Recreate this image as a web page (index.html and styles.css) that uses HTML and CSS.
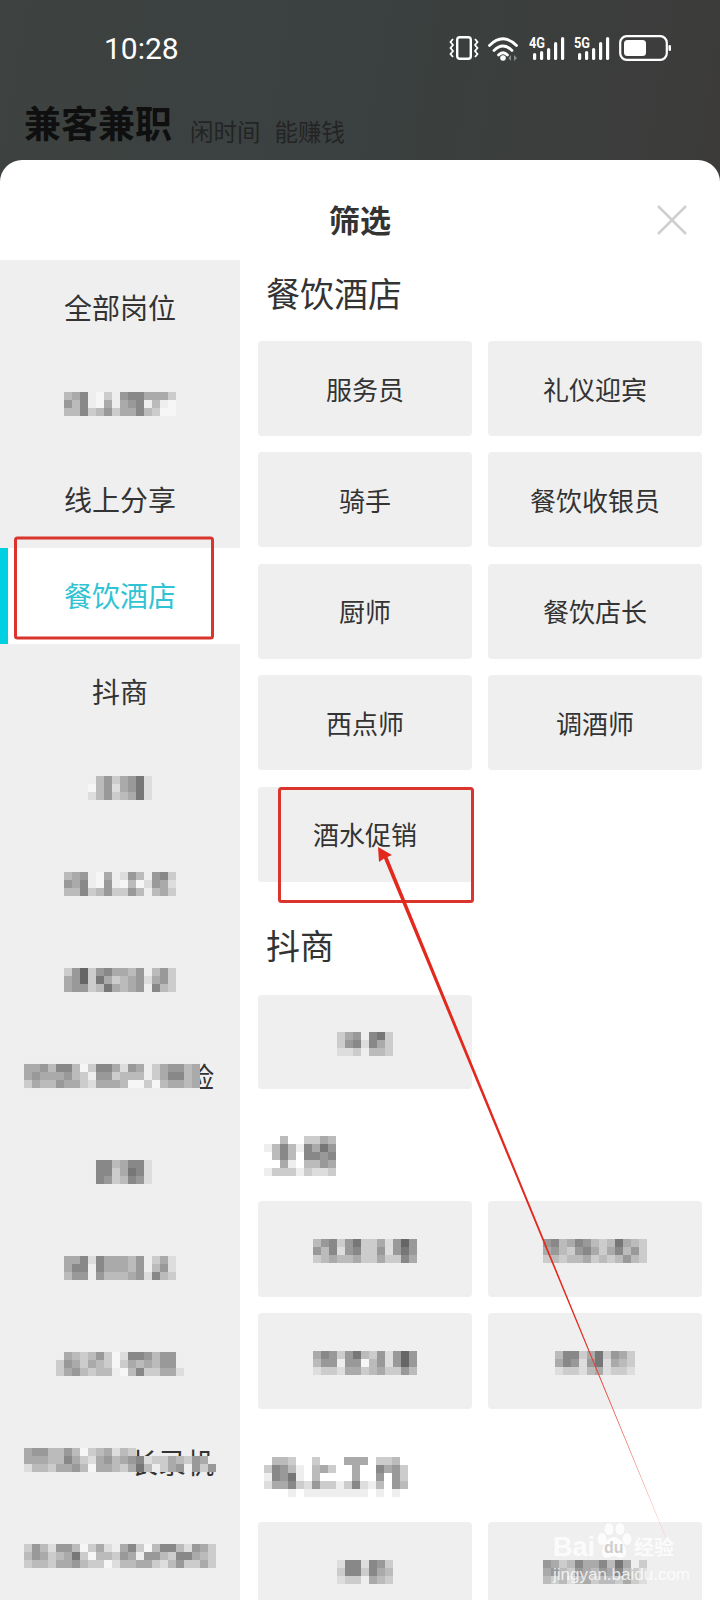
FILE: index.html
```html
<!DOCTYPE html>
<html lang="zh-CN">
<head>
    <meta charset="UTF-8">
    <meta name="viewport" content="width=device-width, initial-scale=1.0">
    <title>筛选</title>
    <link rel="stylesheet" href="styles.css">
</head>
<body>
<div class="backdrop">
    <div class="status-bar">
        <span class="time">10:28</span>
        <div class="status-icons">
            <svg class="icon-vibrate" width="30" height="24" viewBox="0 0 30 24" fill="none" stroke="#fff">
                <rect x="8.200" y="1.200" width="13.600" height="21.600" rx="2.600" stroke-width="2.400"/>
                <path d="M4 3 L1.500 6 L4 9 L1.500 12 L4 15 L1.500 18 L4 21" stroke-width="1.800"/>
                <path d="M26 3 L28.500 6 L26 9 L28.500 12 L26 15 L28.500 18 L26 21" stroke-width="1.800"/>
            </svg>
            <svg class="icon-wifi" width="32" height="25" viewBox="0 0 32 25" fill="none" stroke="#fff" stroke-width="2.800" stroke-linecap="round">
                <path d="M1.500 9.500 Q15 -4 28.500 9.500"/>
                <path d="M6 14.500 Q15 5.500 24 14.500"/>
                <path d="M10.500 19 Q15 14.500 19.500 19"/>
                <circle cx="15" cy="22" r="2.800" fill="#fff" stroke="none"/>
                <path d="M23 19 L20.500 22 L23 25 Z M26 19 L29 22 L26 25 Z" fill="#8b8e8d" stroke="none"/>
            </svg>
            <svg class="icon-signal" width="36" height="25" viewBox="0 0 36 25" fill="#fff">
                <text x="0" y="12" class="net-label" textLength="16" lengthAdjust="spacingAndGlyphs">4G</text>
                <rect x="4" y="17" width="3.200" height="7" rx="1.600"/>
                <rect x="11" y="15" width="3.200" height="9" rx="1.600"/>
                <rect x="18" y="12" width="3.200" height="12" rx="1.600"/>
                <rect x="25" y="6" width="3.200" height="18" rx="1.600"/>
                <rect x="32" y="1" width="3.200" height="23" rx="1.600"/>
            </svg>
            <svg class="icon-signal" width="36" height="25" viewBox="0 0 36 25" fill="#fff">
                <text x="0" y="12" class="net-label" textLength="16" lengthAdjust="spacingAndGlyphs">5G</text>
                <rect x="4" y="17" width="3.200" height="7" rx="1.600"/>
                <rect x="11" y="15" width="3.200" height="9" rx="1.600"/>
                <rect x="18" y="12" width="3.200" height="12" rx="1.600"/>
                <rect x="25" y="6" width="3.200" height="18" rx="1.600"/>
                <rect x="32" y="1" width="3.200" height="23" rx="1.600"/>
            </svg>
            <svg class="icon-battery" width="52" height="26" viewBox="0 0 52 26" fill="none">
                <rect x="1.200" y="1.200" width="46.600" height="23.600" rx="6.500" stroke="#fff" stroke-width="2.200"/>
                <rect x="5" y="5" width="22" height="16" rx="3.500" fill="#fff"/>
                <rect x="49.500" y="10" width="2.500" height="6" rx="1.200" fill="#fff"/>
            </svg>
        </div>
    </div>
    <div class="brand">
        <span class="brand-name">兼客兼职</span>
        <span class="brand-sub">闲时间</span>
        <span class="brand-sub">能赚钱</span>
    </div>
</div>

<div class="sheet">
    <div class="sheet-head">
        <h1>筛选</h1>
        <svg class="close" width="30" height="30" viewBox="0 0 30 30" stroke="#cfcfcf" stroke-width="2.500">
            <path d="M1 1 L29 29 M29 1 L1 29"/>
        </svg>
    </div>
    <div class="sheet-body">
        <ul class="side">
            <li class="side-item">全部岗位</li>
            <li class="side-item"><span class="mosaic" data-rows="ba8efce988aaac|9b8efaea98ebef|bb8cb9caa8bcff"></span></li>
            <li class="side-item">线上分享</li>
            <li class="side-item active">餐饮酒店</li>
            <li class="side-item">抖商</li>
            <li class="side-item"><span class="mosaic" data-rows="eb9ca97d|fb9da97d|db9cba7d"></span></li>
            <li class="side-item"><span class="mosaic" data-rows="ba9efaed9be98c|9a8ef9efbfd9ad|bb8cb9cc9bebac"></span></li>
            <li class="side-item"><span class="mosaic" data-rows="c96c98aab9eb9c|a96c7acba9da9c|a99cb7aba9e8bc"></span></li>
            <li class="side-item side-left">
                <span class="peek">险</span>
                <span class="mosaic" data-rows="eeeeeeeeeeeeeeeeeeeeee|aa9b88bfc88ad9aeca99ba|a9aaa9bce99cbbbeca88ba|cabb9aacdaaabffcfbaaba|eeeeeeeeeeeeeeeeeeeeee"></span>
            </li>
            <li class="side-item"><span class="mosaic" data-rows="e88ba88d|e88ca78d|e89cb89d"></span></li>
            <li class="side-item"><span class="mosaic" data-rows="aa8d8aaab9ecad|a88e8aaab9eb9d|b99e9bbba9d8bc"></span></li>
            <li class="side-item"><span class="mosaic" data-rows="eabcb9cfd889b99e|c9acabcfcabab99e|ca9bcbbefb8ccaad"></span></li>
            <li class="side-item">
                <span class="peek peek-low">长录机</span>
                <span class="mosaic" data-rows="a99bb9bfcbadbc..........|aaabb8acda9ba98dccabc9ae|dbbcaa9bfaabca7beca9e9c9"></span>
            </li>
            <li class="side-item"><span class="mosaic" data-rows="c9bd99bfcadea8cfb88bd9ac|b9acba7cfbbc9ae99bc88abc|cbbcaa9bccfdbbaacdb9ccac"></span></li>
        </ul>

        <div class="main">
            <section class="group">
                <h2>餐饮酒店</h2>
                <div class="cards">
                    <div class="card">服务员</div>
                    <div class="card">礼仪迎宾</div>
                    <div class="card">骑手</div>
                    <div class="card">餐饮收银员</div>
                    <div class="card">厨师</div>
                    <div class="card">餐饮店长</div>
                    <div class="card">西点师</div>
                    <div class="card">调酒师</div>
                    <div class="card">酒水促销</div>
                </div>
            </section>

            <section class="group group-short">
                <h2>抖商</h2>
                <div class="cards">
                    <div class="card"><span class="mosaic" data-rows="ca9e87c|c98d8ac|ddcebbc"></span></div>
                </div>
            </section>

            <section class="group group-tall">
                <h2 class="blurred"><span class="mosaic" data-rows="..b..ccab|eb8be8a79|.b8b.8898|..ae.bb9a|ecccecddc"></span></h2>
                <div class="cards">
                    <div class="card"><span class="mosaic" data-rows="b98c97ccad969|9b8d98cc9d979|cbabbaccacc8a"></span></div>
                    <div class="card"><span class="mosaic" data-rows="98ba89bcb7abc|a9bc98aca8b9c|cbcbbacbcb9bc"></span></div>
                    <div class="card"><span class="mosaic" data-rows="a89c97bc9d969|b99e99fb9d969|dccdaacbacc9b"></span></div>
                    <div class="card"><span class="mosaic" data-rows="b88ca7c9ac|a89d97dabc|dccdbadccd"></span></div>
                </div>
            </section>

            <section class="group">
                <h2 class="blurred"><span class="mosaic" data-rows=".bbc..c...aaa.ccb.|c89be.bac..a..8a9c|e897e.b....a..9.9c|daa8cd9ccec8deb.9b|...e.eeeeeeee.e.e."></span></h2>
                <div class="cards">
                    <div class="card"><span class="mosaic" data-rows="d88d89c|c88c8ab|dcceabc"></span></div>
                    <div class="card"><span class="mosaic" data-rows="9acb8aa8b7aec|a9bc9ab9a8bcd|bcbdbacbbcacd"></span></div>
                </div>
            </section>
        </div>
    </div>
</div>

<svg class="marks" width="720" height="1600" viewBox="0 0 720 1600" fill="none">
    <defs>
        <linearGradient id="fade" x1="0" y1="848" x2="0" y2="1570" gradientUnits="userSpaceOnUse">
            <stop offset="0" stop-color="#e3281e"/>
            <stop offset="0.65" stop-color="#e3281e"/>
            <stop offset="1" stop-color="#f2b0a8"/>
        </linearGradient>
    </defs>
    <rect x="15.500" y="538" width="197" height="100" rx="2" stroke="#d9352c" stroke-width="3"/>
    <rect x="279.500" y="788.500" width="193" height="113" rx="2" stroke="#d9352c" stroke-width="3"/>
    <path d="M378 847 L392 855 L387.500 857 L678 1567 L384 858.500 L379 862 Z" fill="url(#fade)"/>
</svg>

<div class="watermark">
    <div class="wm-top">
        <span class="wm-bai">Bai</span>
        <span class="wm-paw">
            <svg width="38" height="38" viewBox="0 0 38 38" fill="#fff">
                <ellipse cx="7" cy="17" rx="4.500" ry="6"/>
                <ellipse cx="14" cy="7" rx="4.500" ry="6"/>
                <ellipse cx="25" cy="7" rx="4.500" ry="6"/>
                <ellipse cx="32" cy="17" rx="4.500" ry="6"/>
                <path d="M19 15 C26 15 34 28 30 34 C26 38 22 34 19 34 C16 34 12 38 8 34 C4 28 12 15 19 15 Z"/>
            </svg>
            <span class="wm-du">du</span>
        </span>
        <span class="wm-jy">经验</span>
    </div>
    <div class="wm-url">jingyan.baidu.com</div>
</div>

<script src="mosaic.js"></script>
</body>
</html>
```

FILE: styles.css
```css
* {
    box-sizing: border-box;
}

html, body {
    margin: 0;
    height: 1600px;
    overflow: hidden;
}

body {
    position: relative;
    display: flex;
    flex-direction: column;
    font-family: "Noto Sans CJK SC", "Noto Sans", sans-serif;
    color: #333;
    background: linear-gradient(100deg, #3e4241 0%, #3a4140 35%, #3c3b3a 75%, #3e3d3c 100%);
}

.backdrop {
    height: 160px;
    flex: none;
}

.status-bar {
    display: flex;
    justify-content: space-between;
    align-items: center;
    height: 40px;
    margin-top: 28px;
    padding: 0 49px 0 104px;
}

.time {
    font-family: Roboto, sans-serif;
    font-size: 30px;
    color: #fff;
}

.status-icons {
    display: flex;
    align-items: center;
    gap: 9px;
}

.net-label {
    font-family: Roboto, sans-serif;
    font-size: 14px;
    font-weight: 700;
}

.brand {
    display: flex;
    align-items: flex-end;
    gap: 14px;
    margin-top: 32px;
    padding-left: 24px;
    height: 44px;
}

.brand-name {
    font-size: 37px;
    line-height: 44px;
    font-weight: 700;
    color: #0f0f0f;
    margin-right: 4px;
}

.brand-sub {
    position: relative;
    top: 5px;
    font-size: 23.5px;
    line-height: 36px;
    color: #242424;
}

.sheet {
    flex: 1;
    min-height: 0;
    display: flex;
    flex-direction: column;
    background: #fff;
    border-radius: 22px 22px 0 0;
}

.sheet-head {
    position: relative;
    height: 100px;
    flex: none;
    display: flex;
    align-items: center;
    justify-content: center;
    padding-top: 16px;
}

.sheet-head h1 {
    margin: 0;
    font-size: 31px;
    font-weight: 700;
}

.close {
    position: absolute;
    top: 45px;
    right: 33px;
}

.sheet-body {
    flex: 1;
    min-height: 0;
    display: flex;
    overflow: hidden;
}

.side {
    width: 240px;
    flex: none;
    margin: 0;
    padding: 0;
    list-style: none;
    background: #efefef;
}

.side-item {
    position: relative;
    height: 96px;
    display: flex;
    align-items: center;
    justify-content: center;
    padding-bottom: 2px;
    font-size: 28px;
}

.side-item .mosaic {
    top: 1px;
}

.side-item.active {
    background: #fff;
    color: #2fc3d3;
}

.side-item.active::before {
    content: "";
    position: absolute;
    left: 0;
    top: 0;
    bottom: 0;
    width: 8px;
    background: #00d0e2;
}

.side-left {
    justify-content: flex-start;
    padding-left: 24px;
}

/* the bit of a label that sticks out from under the blur */
.peek {
    position: absolute;
    right: 26px;
    top: 0;
    line-height: 96px;
}

.peek-low {
    top: 2px;
}

.mosaic {
    position: relative;
    display: grid;
    grid-auto-rows: 8px;
    grid-auto-columns: 8px;
}

.mosaic i {
    display: block;
}

.main {
    flex: 1;
    min-width: 0;
    padding: 0 18px 0 18px;
}

.group {
    margin-top: 32px;
}

.group:first-child {
    margin-top: 0;
}

.group h2 {
    height: 66px;
    margin: 0 0 15px;
    padding-left: 8px;
    font-size: 34px;
    font-weight: 400;
    line-height: 66px;
}

.group-short h2 {
    line-height: 62px;
}

.group h2.blurred {
    display: flex;
    align-items: center;
    padding-left: 6px;
}

.blurred .mosaic {
    top: 3px;
}

.cards {
    display: grid;
    grid-template-columns: 214px 214px;
    grid-auto-rows: 95px;
    gap: 16.4px 16px;
}

.group-short .cards {
    grid-auto-rows: 94px;
}

.group-tall {
    margin-top: 31px;
}

.group-tall .cards {
    grid-auto-rows: 96px;
    row-gap: 16px;
}

.card {
    display: flex;
    align-items: center;
    justify-content: center;
    padding-bottom: 1px;
    background: #efefef;
    border-radius: 4px;
    font-size: 26px;
}

.card .mosaic {
    top: 3px;
}

.marks {
    position: absolute;
    left: 0;
    top: 0;
    pointer-events: none;
}

.watermark {
    position: absolute;
    left: 553px;
    top: 1522px;
    width: 130px;
    color: rgba(255, 255, 255, 0.8);
}

.wm-top {
    display: flex;
    align-items: flex-end;
    height: 38px;
}

.wm-bai {
    font-family: "Liberation Sans", sans-serif;
    font-size: 27px;
    font-weight: 700;
    line-height: 26px;
}

.wm-paw {
    position: relative;
    width: 38px;
    height: 38px;
    opacity: 0.85;
}

.wm-du {
    position: absolute;
    left: 9px;
    bottom: 3px;
    font-family: "Liberation Sans", sans-serif;
    font-size: 16px;
    font-weight: 700;
    color: #c9c9c9;
}

.wm-jy {
    font-size: 20px;
    line-height: 26px;
    font-weight: 700;
    margin-left: 1px;
}

.wm-url {
    font-family: "Liberation Sans", sans-serif;
    font-size: 17px;
    line-height: 20px;
    margin-top: 5px;
}
```

FILE: mosaic.js
```javascript
// fills each .mosaic from data-rows: one hex digit per cell = grey level, "." = nothing
document.querySelectorAll('.mosaic').forEach(function (el) {
    const rows = el.dataset.rows.split('|');
    rows.forEach(function (row, y) {
        for (let x = 0; x < row.length; x++) {
            const c = row[x];
            if (!/[0-9a-f]/.test(c)) continue;
            const cell = document.createElement('i');
            cell.style.gridRow = y + 1;
            cell.style.gridColumn = x + 1;
            cell.style.background = c === 'f' ? '#f6f6f6' : '#' + c + c + c;
            el.appendChild(cell);
        }
    });
});
```
